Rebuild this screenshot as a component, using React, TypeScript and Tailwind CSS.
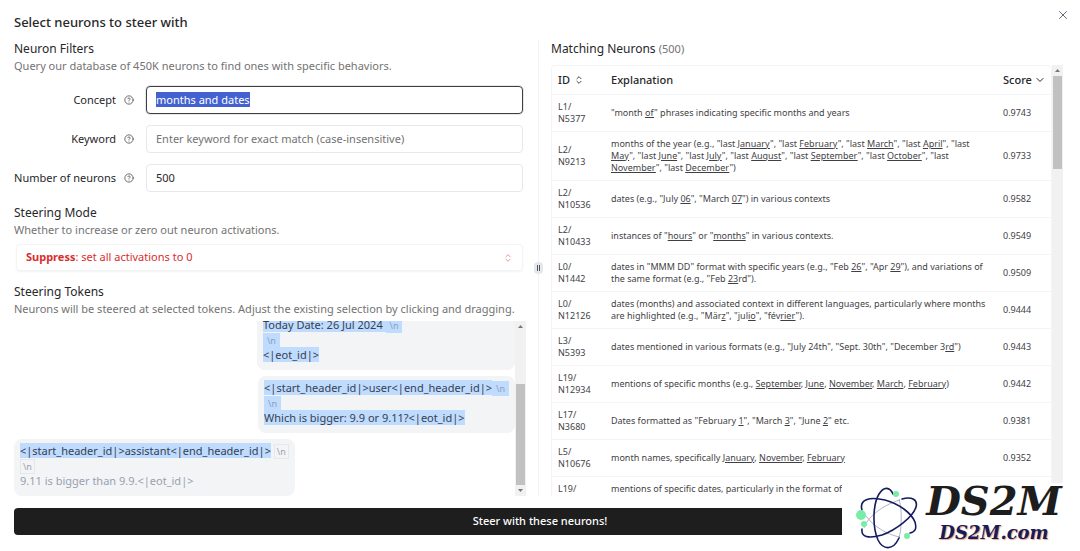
import type { ReactNode } from "react"
import { ChevronDown, ChevronsUpDown, CircleHelp, X } from "lucide-react"

// Words between underscores are the highlighted parts of an explanation
const neurons = [
  { layer: "L1", id: "N5377", text: '"month _of_" phrases indicating specific months and years', score: "0.9743" },
  {
    layer: "L2",
    id: "N9213",
    text: 'months of the year (e.g., "last _January_", "last _February_", "last _March_", "last _April_", "last _May_", "last _June_", "last _July_", "last _August_", "last _September_", "last _October_", "last _November_", "last _December_")',
    score: "0.9733",
  },
  { layer: "L2", id: "N10536", text: 'dates (e.g., "July _06_", "March _07_") in various contexts', score: "0.9582" },
  { layer: "L2", id: "N10433", text: 'instances of "_hours_" or "_months_" in various contexts.', score: "0.9549" },
  {
    layer: "L0",
    id: "N1442",
    text: 'dates in "MMM DD" format with specific years (e.g., "Feb _26_", "Apr _29_"), and variations of the same format (e.g., "Feb _23_rd").',
    score: "0.9509",
  },
  {
    layer: "L0",
    id: "N12126",
    text: 'dates (months) and associated context in different languages, particularly where months are highlighted (e.g., "Mär_z_", "jul_io_", "fév_rier_").',
    score: "0.9444",
  },
  { layer: "L3", id: "N5393", text: 'dates mentioned in various formats (e.g., "July 24th", "Sept. 30th", "December 3_rd_")', score: "0.9443" },
  { layer: "L19", id: "N12934", text: "mentions of specific months (e.g., _September_, _June_, _November_, _March_, _February_)", score: "0.9442" },
  { layer: "L17", id: "N3680", text: 'Dates formatted as "February _1_", "March _3_", "June _2_" etc.', score: "0.9381" },
  { layer: "L5", id: "N10676", text: "month names, specifically _January_, _November_, _February_", score: "0.9352" },
  { layer: "L19", id: "", text: "mentions of specific dates, particularly in the format of", score: "" },
]

function Explanation({ text }: { text: string }) {
  return (
    <>
      {text.split("_").map((part, i) =>
        i % 2 ? (
          <span key={i} className="underline underline-offset-1">
            {part}
          </span>
        ) : (
          part
        )
      )}
    </>
  )
}

function FieldLabel({ id, children }: { id: string; children: ReactNode }) {
  return (
    <label
      htmlFor={id}
      className="flex w-[132px] shrink-0 items-center justify-end gap-2 pr-3 text-[11px] whitespace-nowrap"
    >
      {children}
      <CircleHelp className="size-[10px] text-neutral-600" />
    </label>
  )
}

function SectionHeading({ title, note }: { title: string; note: string }) {
  return (
    <div>
      <h2 className="text-[12px] leading-[18px]">{title}</h2>
      <p className="text-[11px] leading-4 text-neutral-500">{note}</p>
    </div>
  )
}

function Selected({ children }: { children: ReactNode }) {
  return <span className="bg-[#bfdbfe] text-gray-700">{children}</span>
}

function Newline({ selected = false }: { selected?: boolean }) {
  return selected ? (
    <span className="bg-[#bfdbfe] px-1 py-px text-[9px] leading-3 text-[#8c9fc0]">\n</span>
  ) : (
    <span className="border border-gray-200 px-[2px] text-[9px] leading-3 text-gray-400">\n</span>
  )
}

function Scrollbar({ thumb }: { thumb: string }) {
  return (
    <div className="flex w-[11px] shrink-0 flex-col items-center bg-[#f1f1f1]">
      <svg viewBox="0 0 11 11" className="size-[11px] shrink-0">
        <path d="M3 7L5.500 4L8 7Z" fill="#777" />
      </svg>
      <div className="flex w-full flex-1 flex-col px-px">
        <div className={thumb} />
      </div>
      <svg viewBox="0 0 11 11" className="size-[11px] shrink-0">
        <path d="M3 4L5.500 7L8 4Z" fill="#777" />
      </svg>
    </div>
  )
}

function Watermark() {
  return (
    <div className="absolute right-0 bottom-0 flex h-[68px] w-[238px] bg-white pr-3 pl-[14px]">
      <svg viewBox="0 0 64 64" className="mt-[3px] size-[64px] shrink-0" fill="none">
        <g stroke="#8b90b5" strokeWidth="0.7">
          <path d="M43 13C46 22 46 42 43 52" />
          <path d="M9 29C18 41 32 49 44 51" />
          <path d="M8 42C11 32 26 19 44 14" />
        </g>
        <g stroke="#141c5c" strokeWidth="1.6" strokeLinecap="round">
          <path d="M37 8C34 1 28 0 23 8C17 18 16 40 22 54C27 64 37 65 43 52" />
          <path d="M6 24C3 14 13 10 29 14C44 18 56 28 59 36C61 43 59 46 54 47" />
          <path d="M46 13C56 10 62 14 60 21C57 31 40 44 26 49C12 53 5 51 6 43" />
        </g>
        <g fill="#78eda5">
          <circle cx="40" cy="8" r="3" />
          <circle cx="5" cy="29" r="5" />
          <circle cx="8" cy="38" r="3" />
          <circle cx="51" cy="50" r="3" />
        </g>
      </svg>
      <div className="flex flex-1 flex-col items-center whitespace-nowrap font-['DejaVu_Serif',serif] font-bold italic">
        <span className="text-[40px] leading-[36px] text-[#1d1d1d]">DS2M</span>
        <span className="text-[18px] leading-7 text-[#141c5c] [text-shadow:1px_1px_1px_#f0a080]">DS2M.com</span>
      </div>
    </div>
  )
}

export default function App() {
  const input =
    "h-[28px] w-full rounded border border-[#e8e8e8] bg-white px-[9px] pb-[2px] text-[11px] outline-none placeholder:text-neutral-500"

  return (
    <div className="relative flex h-screen flex-col overflow-hidden bg-white px-[14px] pt-[12px] pb-4 font-['Noto_Sans',sans-serif] text-[#27272a]">
      <header className="flex items-start justify-between">
        <h1 className="text-[13px] leading-5 font-medium">Select neurons to steer with</h1>
        <button aria-label="Close" className="-mt-1 -mr-1">
          <X className="size-[14px] text-gray-600" strokeWidth={1.5} />
        </button>
      </header>

      <main className="mt-2 flex min-h-0 flex-1">
        {/* Filters, mode and tokens */}
        <section className="flex min-w-0 flex-1 flex-col pr-3">
          <SectionHeading title="Neuron Filters" note="Query our database of 450K neurons to find ones with specific behaviors." />

          <div className="mt-3 mr-[3px] flex flex-col gap-[11px]">
            <div className="flex">
              <FieldLabel id="concept">Concept</FieldLabel>
              <input
                id="concept"
                autoFocus
                onFocus={(e) => e.currentTarget.select()}
                defaultValue="months and dates"
                className={`${input} selection:bg-[#4361d0] selection:text-white focus:border-neutral-700 focus:ring-1 focus:ring-gray-200`}
              />
            </div>
            <div className="flex">
              <FieldLabel id="keyword">Keyword</FieldLabel>
              <input id="keyword" placeholder="Enter keyword for exact match (case-insensitive)" className={input} />
            </div>
            <div className="flex">
              <FieldLabel id="count">Number of neurons</FieldLabel>
              <input id="count" defaultValue="500" className={input} />
            </div>
          </div>

          <div className="mt-3">
            <SectionHeading title="Steering Mode" note="Whether to increase or zero out neuron activations." />
          </div>
          <button className="mt-[6px] mr-[3px] ml-[2px] flex h-[27px] shrink-0 items-center justify-between rounded border border-gray-100 px-[9px] text-[11px] text-[#d92d2d] shadow-xs">
            <span>
              <b>Suppress</b>: set all activations to 0
            </span>
            <ChevronsUpDown className="size-[10px] opacity-60" />
          </button>

          <div className="mt-3">
            <SectionHeading
              title="Steering Tokens"
              note="Neurons will be steered at selected tokens. Adjust the existing selection by clicking and dragging."
            />
          </div>
          <div className="mt-1 flex min-h-0 flex-1">
            <div className="flex min-w-0 flex-1 flex-col justify-end gap-[6px] overflow-hidden text-[11px] leading-[15px]">
              <div className="w-[258px] shrink-0 self-end rounded-b-lg bg-gray-100 px-[6px] pb-2">
                <Selected>Today Date: 26 Jul 2024 </Selected>
                <Newline selected />
                <br />
                <Newline selected />
                <br />
                <Selected>&lt;|eot_id|&gt;</Selected>
              </div>
              <div className="shrink-0 self-end rounded-lg bg-gray-100 px-[6px] pt-1 pb-2">
                <Selected>&lt;|start_header_id|&gt;user&lt;|end_header_id|&gt;</Selected>
                <Newline selected />
                <br />
                <Newline selected />
                <br />
                <Selected>Which is bigger: 9.9 or 9.11?&lt;|eot_id|&gt;</Selected>
              </div>
              <div className="shrink-0 self-start rounded-lg bg-gray-100 px-[6px] pt-1 pb-2 text-gray-400">
                <Selected>&lt;|start_header_id|&gt;assistant&lt;|end_header_id|&gt;</Selected> <Newline />
                <br />
                <Newline />
                <br />
                9.11 is bigger than 9.9.&lt;|eot_id|&gt;
              </div>
            </div>
            <Scrollbar thumb="mt-auto h-[101px] bg-[#c1c1c1]" />
          </div>
        </section>

        {/* Resize handle */}
        <div className="relative w-px shrink-0 bg-gray-100">
          <div className="absolute top-1/2 -left-1 flex h-3 w-[9px] -translate-y-1/2 items-center justify-center gap-px rounded-sm bg-gray-200">
            <span className="h-[6px] w-px bg-gray-600" />
            <span className="h-[6px] w-px bg-gray-600" />
          </div>
        </div>

        {/* Results */}
        <section className="mr-[3px] flex min-w-0 flex-1 flex-col pl-3">
          <h2 className="text-[12px] leading-[18px]">
            Matching Neurons <span className="text-[11px] text-neutral-500">(500)</span>
          </h2>
          <div className="mt-[7px] flex min-h-0 flex-1">
            <div className="min-w-0 flex-1 overflow-hidden rounded-t border border-b-0 border-gray-100">
              <table className="w-full table-fixed text-left text-[9px] leading-3 text-[#3f3f46]">
                <thead>
                  <tr className="h-7 border-b border-gray-100 text-[11px] text-[#27272a]">
                    <th className="w-[53px] pl-[6px] font-medium">
                      <button className="flex items-center gap-1">
                        ID <ChevronsUpDown className="size-[10px]" />
                      </button>
                    </th>
                    <th className="px-[6px] font-medium">Explanation</th>
                    <th className="w-[54px] pl-[6px] font-medium">
                      <button className="flex items-center gap-[2px]">
                        Score <ChevronDown className="size-3" />
                      </button>
                    </th>
                  </tr>
                </thead>
                <tbody>
                  {neurons.map((n) => (
                    <tr key={n.layer + n.id} className="border-b border-gray-100">
                      <td className="py-[6px] pl-[6px]">
                        {n.layer}/<br />
                        {n.id}
                      </td>
                      <td className="px-[6px] py-[6px]">
                        <Explanation text={n.text} />
                      </td>
                      <td className="pl-[6px]">{n.score}</td>
                    </tr>
                  ))}
                </tbody>
              </table>
            </div>
            <Scrollbar thumb="h-[93px] bg-[#c1c1c1]" />
          </div>
        </section>
      </main>

      <button className="mt-3 h-[27px] shrink-0 rounded bg-[#1e1e1e] text-[11px] font-medium text-white">
        Steer with these neurons!
      </button>

      <Watermark />
    </div>
  )
}
